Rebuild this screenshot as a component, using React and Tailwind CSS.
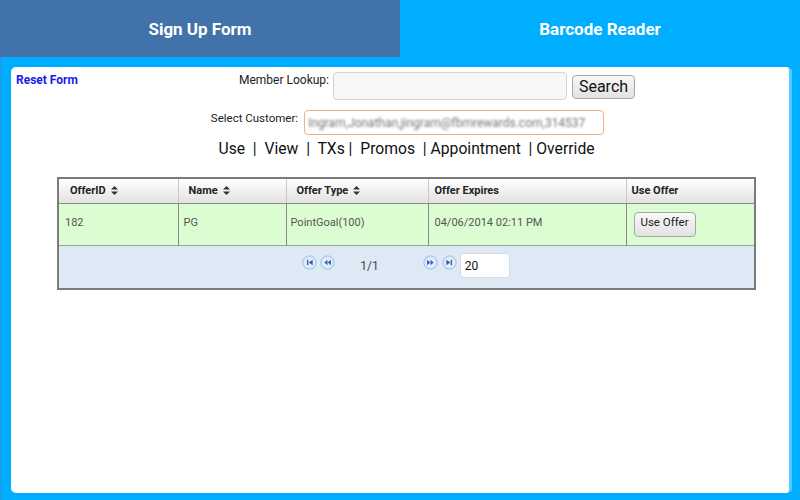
import React from "react";

function SortIcon() {
  return (
    <svg width="7" height="9" viewBox="0 0 7 9" className="inline-block ml-[5px] align-[-1px]">
      <path d="M3.5 0 L7 3.5 L0 3.5 Z" fill="#333" />
      <path d="M0 5.5 L7 5.5 L3.5 9 Z" fill="#333" />
    </svg>
  );
}

function PagerIcon({ kind }) {
  let glyph;
  if (kind === "first") {
    glyph = (
      <>
        <rect x="4.6" y="4.5" width="1.3" height="5" fill="#2f62ad" />
        <path d="M10 4.5 L10 9.5 L6.2 7 Z" fill="#2f62ad" />
      </>
    );
  } else if (kind === "prev") {
    glyph = (
      <>
        <path d="M7 4.5 L7 9.5 L4 7 Z" fill="#2f62ad" />
        <path d="M10.2 4.5 L10.2 9.5 L7.2 7 Z" fill="#2f62ad" />
      </>
    );
  } else if (kind === "next") {
    glyph = (
      <>
        <path d="M3.8 4.5 L3.8 9.5 L6.8 7 Z" fill="#2f62ad" />
        <path d="M7 4.5 L7 9.5 L10 7 Z" fill="#2f62ad" />
      </>
    );
  } else {
    glyph = (
      <>
        <path d="M4 4.5 L4 9.5 L7.8 7 Z" fill="#2f62ad" />
        <rect x="8.1" y="4.5" width="1.3" height="5" fill="#2f62ad" />
      </>
    );
  }
  return (
    <svg width="15" height="15" viewBox="0 0 14 14" className="block">
      <circle cx="7" cy="7" r="6.3" fill="#c9dcf3" stroke="#a9c3e6" strokeWidth="0.9" />
      <circle cx="7" cy="7" r="5" fill="#e4eefa" />
      {glyph}
    </svg>
  );
}

export default function App() {
  const font = { fontFamily: "Roboto, 'Noto Sans', sans-serif" };
  return (
    <div className="w-[800px] h-[500px] overflow-hidden bg-[#00aeff] flex flex-col" style={font}>
      {/* Tabs */}
      <div className="flex h-[57px] shrink-0">
        <div className="w-[400px] bg-[#4172aa] flex items-center justify-center text-white font-bold text-[17px] pt-[2px]">
          Sign Up Form
        </div>
        <div className="flex-1 bg-[#00aeff] flex items-center justify-center text-white font-bold text-[17px] pt-[2px]">
          Barcode Reader
        </div>
      </div>

      {/* Body */}
      <div className="flex-1 pl-[9px] pr-[8px] pt-[10px] pb-[7px] border-l-[2px] border-[#1a9ee6]">
        <div className="h-full bg-white rounded-[5px] border-r-[3px] border-[#55ccff] flex flex-col">
          {/* Row 1 */}
          <div className="flex items-start pt-[5px]">
            <div className="w-[72px] pl-[5px] pt-[1px] text-[12px] font-bold text-[#1a1aee] leading-[14px] shrink-0">
              Reset Form
            </div>
            <div className="flex-1 flex items-start justify-center pl-[2px]">
              <span className="text-[12px] text-[#222] leading-[14px] pt-[1px] mr-[4px]">Member Lookup:</span>
              <div className="w-[234px] h-[28px] rounded-[4px] border border-[#d2d2d2] bg-[#f7f7f7]" />
              <button className="ml-[5px] mt-[3px] w-[63px] h-[24px] rounded-[4px] border border-[#a9a9a9] bg-gradient-to-b from-[#f7f7f7] to-[#e2e2e2] text-[16px] text-[#111] leading-[20px]">
                Search
              </button>
            </div>
          </div>

          {/* Row 2 */}
          <div className="flex items-start justify-center mt-[10px] pl-[15px]">
            <span className="text-[11.5px] text-[#222] leading-[14px] pt-[1px] mr-[6px]">Select Customer:</span>
            <div className="w-[300px] h-[25px] rounded-[4px] border border-[#f0b285] bg-white flex items-center px-[3px] overflow-hidden">
              <span className="text-[12px] text-[#777] whitespace-nowrap blur-[1.2px]">
                Ingram,Jonathan,jingram@fbmrewards.com,314537
              </span>
            </div>
          </div>

          {/* Row 3 links */}
          <div className="flex justify-center mt-[4px] pl-[13px] text-[15.7px] text-[#111] leading-[20px] whitespace-pre">
            {"Use  |  View  |  TXs |  Promos  | Appointment  | Override"}
          </div>

          {/* Table */}
          <div className="mt-[18px] ml-[46px] w-[699px] border-[2px] border-[#7b7b7b]">
            <table className="w-full border-collapse table-fixed">
              <colgroup>
                <col className="w-[119px]" />
                <col className="w-[108px]" />
                <col className="w-[142px]" />
                <col className="w-[198px]" />
                <col className="w-[128px]" />
              </colgroup>
              <thead>
                <tr className="h-[24px] bg-gradient-to-b from-[#ffffff] to-[#e2e2e2] text-[11px] font-bold text-[#222] text-left">
                  <th className="pl-[11px] font-bold border-r border-[#c8c8c8] border-b border-b-[#8a8a8a]">OfferID<SortIcon /></th>
                  <th className="pl-[10px] font-bold border-r border-[#c8c8c8] border-b border-b-[#8a8a8a]">Name<SortIcon /></th>
                  <th className="pl-[10px] font-bold border-r border-[#c8c8c8] border-b border-b-[#8a8a8a]">Offer Type<SortIcon /></th>
                  <th className="pl-[6px] font-bold border-r border-[#c8c8c8] border-b border-b-[#8a8a8a]">Offer Expires</th>
                  <th className="pl-[5px] font-bold border-b border-b-[#8a8a8a]">Use Offer</th>
                </tr>
              </thead>
              <tbody>
                <tr className="h-[42px] bg-[#dcfdd1] text-[11px] text-[#555]">
                  <td className="pl-[6px] border-r border-[#8a8a8a] pb-[1px]">182</td>
                  <td className="pl-[5px] border-r border-[#8a8a8a] pb-[1px]">PG</td>
                  <td className="pl-[4px] border-r border-[#8a8a8a] pb-[1px]">PointGoal(100)</td>
                  <td className="pl-[6px] border-r border-[#8a8a8a] pb-[1px]">04/06/2014 02:11 PM</td>
                  <td className="pl-[7px] align-top pt-[8px]">
                    <button className="w-[62px] h-[25px] rounded-[4px] border border-[#a5a5a5] bg-gradient-to-b from-[#f8f8f8] to-[#e3e3e3] text-[11.5px] text-[#222] leading-[14px] pb-[4px]">
                      Use Offer
                    </button>
                  </td>
                </tr>
                <tr className="h-[43px] bg-[#dee9f6] border-t border-[#a0a0a0]">
                  <td colSpan={5} className="align-top">
                    <div className="flex justify-center pt-[7px] pr-[1px]">
                      <div className="flex items-start">
                        <div className="mt-[2px]"><PagerIcon kind="first" /></div>
                        <div className="mt-[2px] ml-[3px]"><PagerIcon kind="prev" /></div>
                        <div className="ml-[25px] mt-[6px] text-[12px] text-[#444] leading-[14px]">1/1</div>
                        <div className="mt-[2px] ml-[44px]"><PagerIcon kind="next" /></div>
                        <div className="mt-[2px] ml-[4px]"><PagerIcon kind="last" /></div>
                        <div className="ml-[3px] w-[50px] h-[25px] rounded-[4px] border border-[#d8dde4] bg-white text-[12px] text-[#111] leading-[14px] pl-[4px] pt-[5px]">
                          20
                        </div>
                      </div>
                    </div>
                  </td>
                </tr>
              </tbody>
            </table>
          </div>
        </div>
      </div>
    </div>
  );
}
